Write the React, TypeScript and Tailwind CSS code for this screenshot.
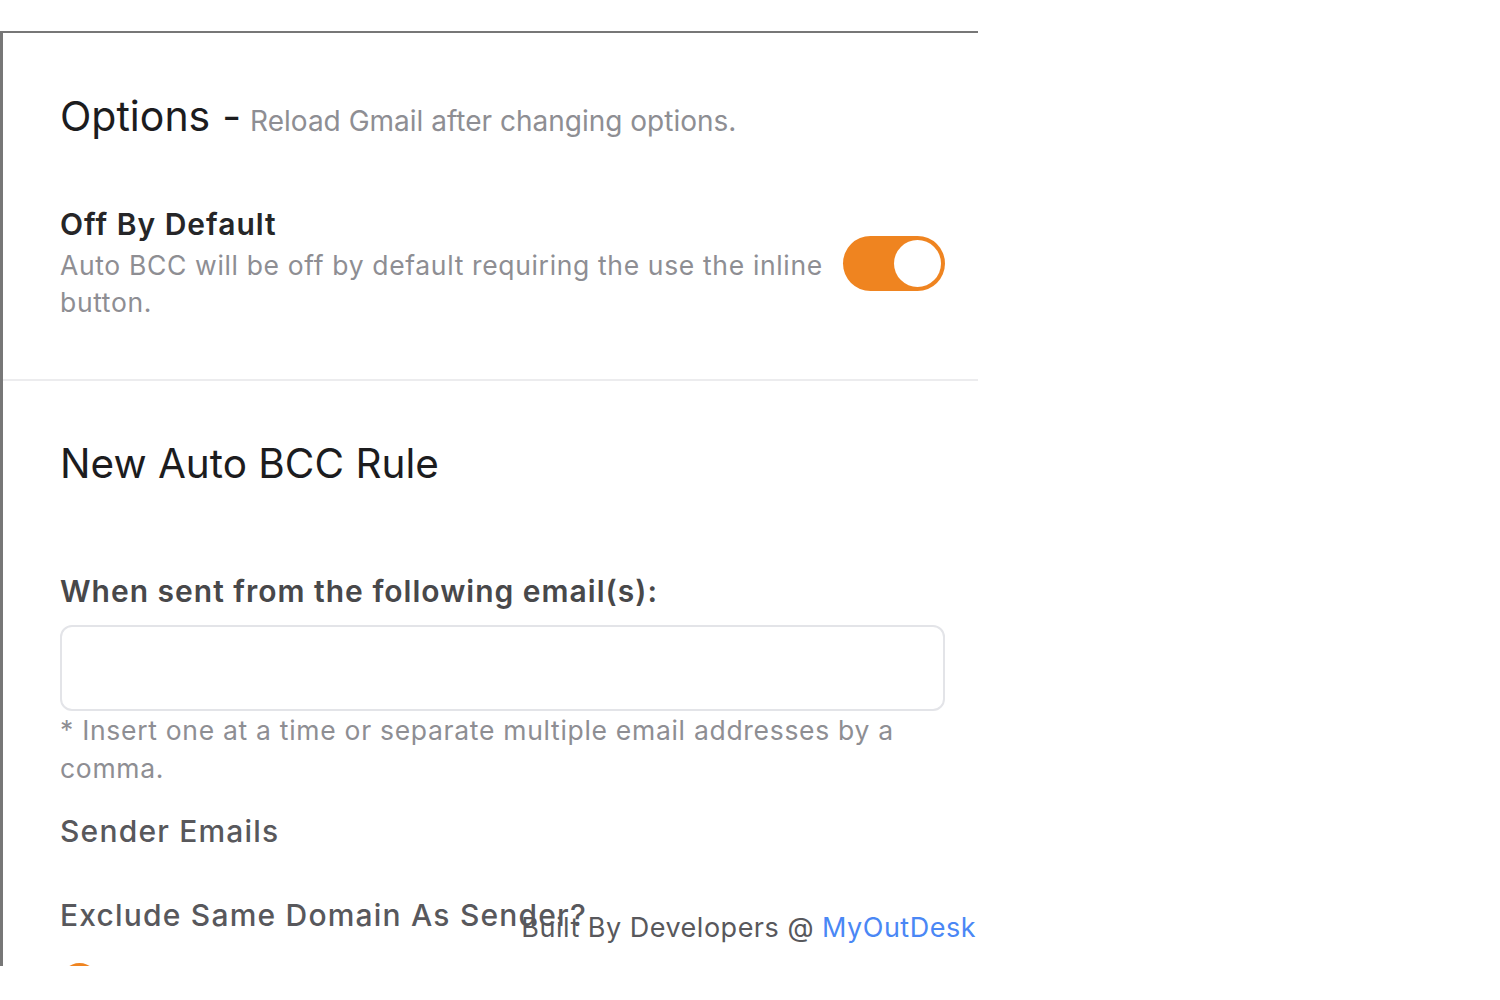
import React from 'react';

const font = { fontFamily: 'Inter, "Liberation Sans", Arial, sans-serif' };

const Toggle: React.FC<{ on?: boolean }> = ({ on = true }) => (
  <div
    className={`relative w-[102px] h-[55px] shrink-0 rounded-full ${on ? 'bg-[#ef8420]' : 'bg-gray-300'}`}
  >
    <div
      className={`absolute top-[4px] w-[47px] h-[47px] rounded-full bg-white ${on ? 'right-[4px]' : 'left-[4px]'}`}
    />
  </div>
);

const App: React.FC = () => {
  return (
    <div className="w-[1500px] h-[1000px] bg-white pt-[31px]" style={font}>
      <div className="relative w-[978px] h-[935px] border-l-[3px] border-t-2 border-[#777777] overflow-hidden">
        {/* Options */}
        <div className="pl-[57px] pr-[33px] pt-[59px]">
          <h1 className="flex items-baseline leading-[48px] text-[41px] text-[#1c1c1e]">
            Options<span className="ml-[12px]">-</span>
            <span className="ml-[9px] text-[28px] text-[#8e8e93]">Reload Gmail after changing options.</span>
          </h1>

          <div className="mt-[60px] flex items-center justify-between gap-4">
            <div className="max-w-[790px]">
              <div className="text-[30px] leading-[38px] font-semibold tracking-[1px] text-[#262628]">Off By Default</div>
              <p className="mt-[4px] text-[26.5px] leading-[37px] tracking-[0.65px] text-[#8e8e93]">
                Auto BCC will be off by default requiring the use the inline button.
              </p>
            </div>
            <Toggle />
          </div>
        </div>

        <div className="mt-[58px] h-[2px] bg-[#ececee]" />

        {/* New rule */}
        <div className="pl-[57px] pr-[33px] pt-[59px]">
          <h2 className="text-[40.5px] leading-[48px] text-[#1c1c1e]">New Auto BCC Rule</h2>

          <label className="block mt-[84px] text-[30px] leading-[38px] font-semibold tracking-[1px] text-[#48484a]">
            When sent from the following email(s):
          </label>
          <input
            type="text"
            className="mt-[15px] block w-full h-[86px] rounded-[12px] border-2 border-[#e3e4e8] bg-white px-4 outline-none"
          />
          <p className="text-[26.5px] leading-[38px] tracking-[0.7px] text-[#8e8e93] max-w-[860px]">
            * Insert one at a time or separate multiple email addresses by a comma.
          </p>

          <div className="mt-[25px] text-[30px] leading-[38px] font-medium tracking-[1.2px] text-[#58585c]">Sender Emails</div>

          <div className="mt-[46px] text-[30px] leading-[38px] font-medium tracking-[1.2px] text-[#58585c]">
            Exclude Same Domain As Sender?
          </div>
          <div className="mt-[29px] ml-[1px] w-[37px] h-[37px] rounded-full bg-[#ef8420]" />
        </div>

        {/* Footer */}
        <div className="absolute right-[2px] bottom-[19px] text-[27px] leading-[38px] tracking-[0.5px] text-[#58585c]">
          Built By Developers @ <a className="text-[#4a87f5]">MyOutDesk</a>
        </div>
      </div>
    </div>
  );
};

export default App;
